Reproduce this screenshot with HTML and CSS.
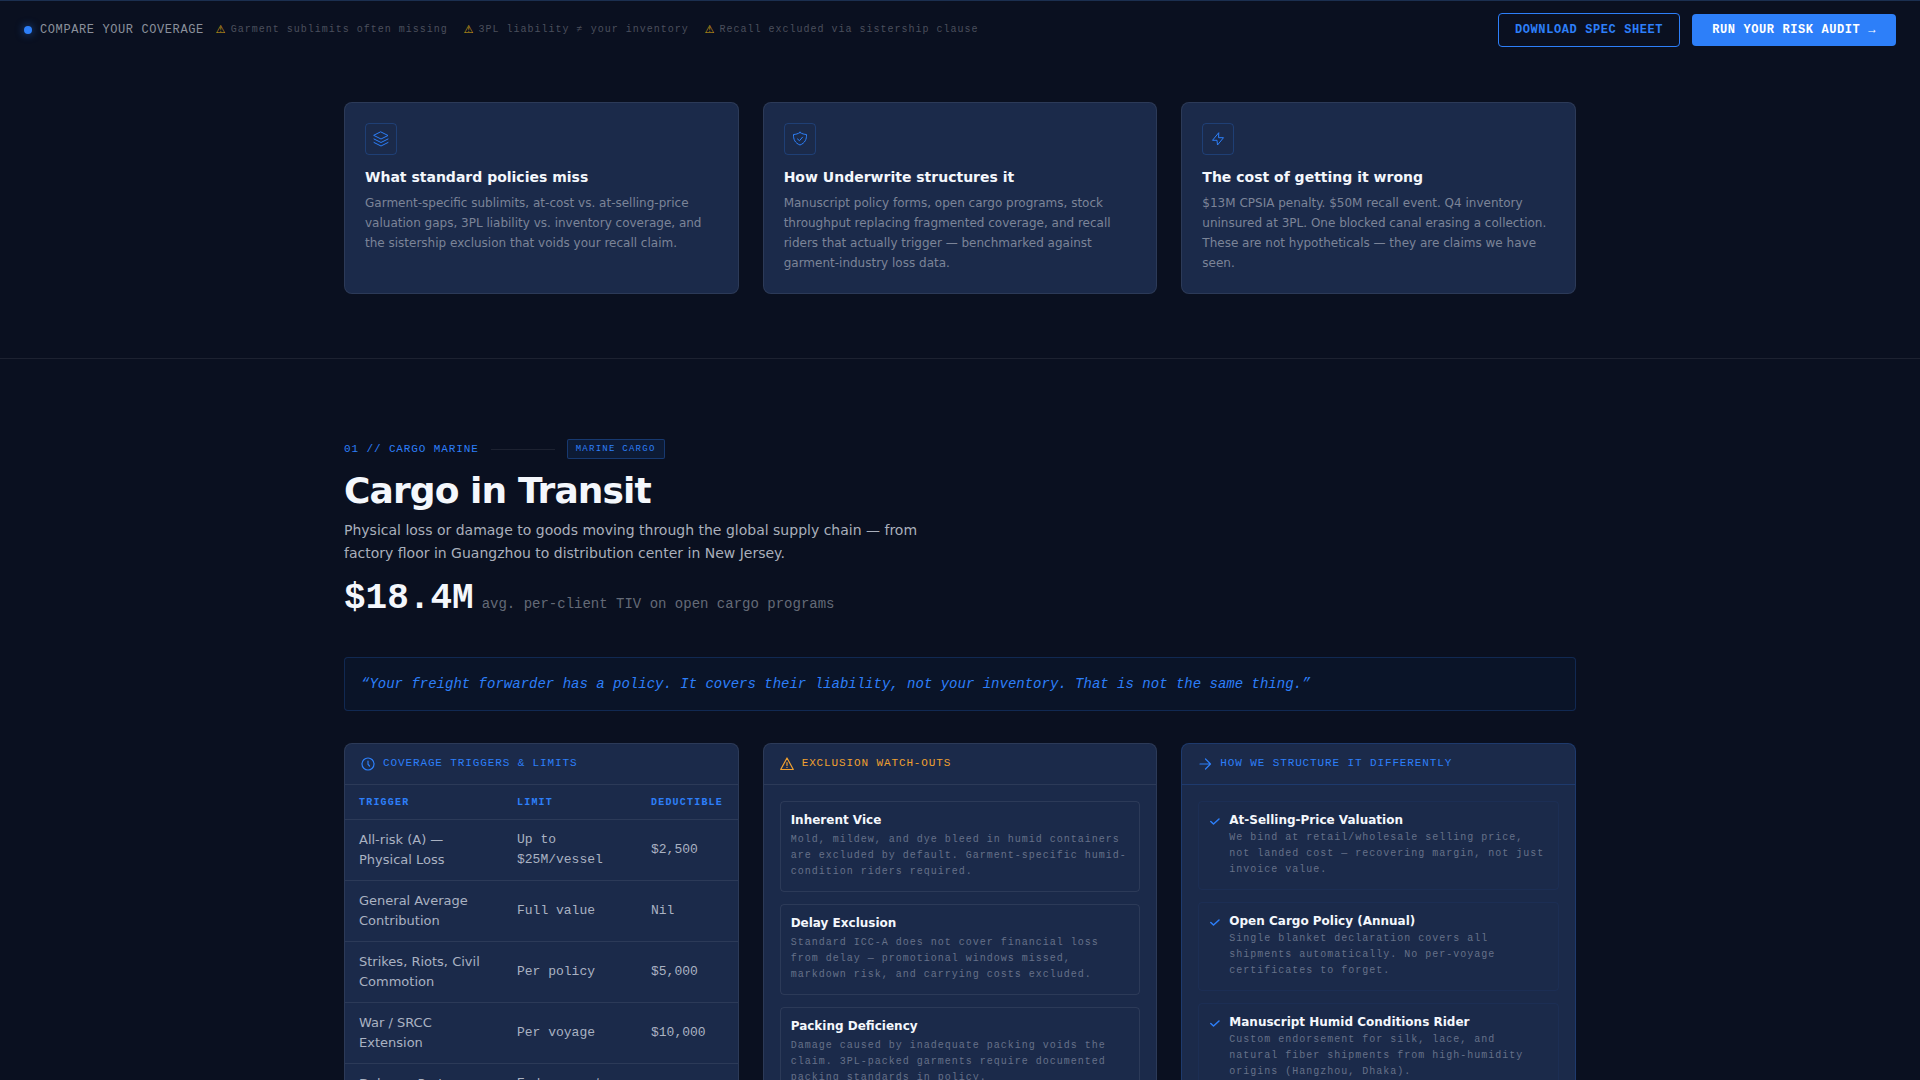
FILE: index.html
```html
<!DOCTYPE html>
<html lang="en">

<head>
    <meta charset="UTF-8" />
    <meta name="viewport" content="width=device-width, initial-scale=1.0" />
    <title>Underwrite | Cargo in Transit</title>
    <link rel="stylesheet" href="styles.css">
</head>

<body>
    <header class="compare-bar">
        <div class="compare-left">
            <span class="dot"></span>
            <span class="compare-label">COMPARE YOUR COVERAGE</span>
            <ul class="warnings">
                <li><span class="warn-sign">⚠</span>Garment sublimits often missing</li>
                <li><span class="warn-sign">⚠</span>3PL liability ≠ your inventory</li>
                <li><span class="warn-sign">⚠</span>Recall excluded via sistership clause</li>
            </ul>
        </div>
        <div class="compare-actions">
            <button type="button" class="btn btn-outline">DOWNLOAD SPEC SHEET</button>
            <button type="button" class="btn btn-solid">RUN YOUR RISK AUDIT →</button>
        </div>
    </header>

    <main>
        <section class="intro">
            <div class="container grid">
                <article class="card">
                    <div class="card-icon">
                        <svg width="16" height="16" viewBox="0 0 16 16" fill="none" stroke="currentColor" stroke-linecap="round" stroke-linejoin="round">
                            <path d="M8 1 15 4.500 8 8 1 4.500z" />
                            <path d="M1 8l7 3.500L15 8" />
                            <path d="M1 11.500l7 3.500 7-3.500" />
                        </svg>
                    </div>
                    <h3>What standard policies miss</h3>
                    <p>Garment-specific sublimits, at-cost vs. at-selling-price valuation gaps, 3PL liability vs. inventory coverage, and the sistership exclusion that voids your recall claim.</p>
                </article>
                <article class="card">
                    <div class="card-icon">
                        <svg width="16" height="16" viewBox="0 0 16 16" fill="none" stroke="currentColor" stroke-linecap="round" stroke-linejoin="round">
                            <path d="M8 1.500c2 1.300 4.200 1.900 6.500 2 .2 4.800-1.500 8.600-6.500 10.500C3 12.100 1.300 8.300 1.500 3.500 3.800 3.400 6 2.800 8 1.500z" />
                            <path d="M5.500 8l2 1.700 3-3.500" />
                        </svg>
                    </div>
                    <h3>How Underwrite structures it</h3>
                    <p>Manuscript policy forms, open cargo programs, stock throughput replacing fragmented coverage, and recall riders that actually trigger — benchmarked against garment-industry loss data.</p>
                </article>
                <article class="card">
                    <div class="card-icon">
                        <svg width="16" height="16" viewBox="0 0 16 16" fill="none" stroke="currentColor" stroke-linecap="round" stroke-linejoin="round">
                            <path d="M8.500 2 2.500 9.300H7L7.500 14l6-7.300H9z" />
                        </svg>
                    </div>
                    <h3>The cost of getting it wrong</h3>
                    <p>$13M CPSIA penalty. $50M recall event. Q4 inventory uninsured at 3PL. One blocked canal erasing a collection. These are not hypotheticals — they are claims we have seen.</p>
                </article>
            </div>
        </section>

        <section class="coverage">
            <div class="container">
                <div class="eyebrow">
                    <span>01 // CARGO MARINE</span>
                    <span class="rule"></span>
                    <span class="tag">MARINE CARGO</span>
                </div>
                <h2>Cargo in Transit</h2>
                <p class="lead">Physical loss or damage to goods moving through the global supply chain — from factory floor in Guangzhou to distribution center in New Jersey.</p>
                <div class="stat">
                    <span class="stat-value">$18.4M</span>
                    <span class="stat-label">avg. per-client TIV on open cargo programs</span>
                </div>

                <blockquote>“Your freight forwarder has a policy. It covers their liability, not your inventory. That is not the same thing.”</blockquote>

                <div class="grid">
                    <div class="panel">
                        <div class="panel-head">
                            <svg width="14" height="14" viewBox="0 0 14 14" fill="none" stroke="currentColor" stroke-width="1.200" stroke-linecap="round">
                                <circle cx="7" cy="7" r="6" />
                                <path d="M7 4v3.200l1.500 1.800" />
                            </svg>
                            <h3>COVERAGE TRIGGERS &amp; LIMITS</h3>
                        </div>
                        <table>
                            <thead>
                                <tr>
                                    <th class="col-trigger">TRIGGER</th>
                                    <th class="col-limit">LIMIT</th>
                                    <th>DEDUCTIBLE</th>
                                </tr>
                            </thead>
                            <tbody>
                                <tr>
                                    <td>All-risk (A) — Physical Loss</td>
                                    <td>Up to $25M/vessel</td>
                                    <td>$2,500</td>
                                </tr>
                                <tr>
                                    <td>General Average Contribution</td>
                                    <td>Full value</td>
                                    <td>Nil</td>
                                </tr>
                                <tr>
                                    <td>Strikes, Riots, Civil Commotion</td>
                                    <td>Per policy</td>
                                    <td>$5,000</td>
                                </tr>
                                <tr>
                                    <td>War / SRCC Extension</td>
                                    <td>Per voyage</td>
                                    <td>$10,000</td>
                                </tr>
                                <tr>
                                    <td>Delay — Port Congestion</td>
                                    <td>Endorsement required</td>
                                    <td>Varies</td>
                                </tr>
                            </tbody>
                        </table>
                    </div>

                    <div class="panel">
                        <div class="panel-head panel-head-warn">
                            <svg width="14" height="14" viewBox="0 0 14 14" fill="none" stroke="currentColor" stroke-width="1.200" stroke-linecap="round" stroke-linejoin="round">
                                <path d="M7 1 13.300 12.500H.7z" />
                                <path d="M7 5.500v3M7 10.300v.2" />
                            </svg>
                            <h3>EXCLUSION WATCH-OUTS</h3>
                        </div>
                        <div class="panel-body">
                            <div class="exclusion">
                                <h4>Inherent Vice</h4>
                                <p>Mold, mildew, and dye bleed in humid containers are excluded by default. Garment-specific humid-condition riders required.</p>
                            </div>
                            <div class="exclusion">
                                <h4>Delay Exclusion</h4>
                                <p>Standard ICC-A does not cover financial loss from delay — promotional windows missed, markdown risk, and carrying costs excluded.</p>
                            </div>
                            <div class="exclusion">
                                <h4>Packing Deficiency</h4>
                                <p>Damage caused by inadequate packing voids the claim. 3PL-packed garments require documented packing standards in policy.</p>
                            </div>
                        </div>
                    </div>

                    <div class="panel panel-blue">
                        <div class="panel-head">
                            <svg width="14" height="14" viewBox="0 0 14 14" fill="none" stroke="currentColor" stroke-width="1.200" stroke-linecap="round" stroke-linejoin="round">
                                <path d="M2 7h10M7.500 2 12.500 7l-5 5" />
                            </svg>
                            <h3>HOW WE STRUCTURE IT DIFFERENTLY</h3>
                        </div>
                        <div class="panel-body">
                            <div class="solution">
                                <svg class="check" width="12" height="14" viewBox="0 0 12 14" fill="none" stroke="currentColor" stroke-width="1.500" stroke-linecap="round" stroke-linejoin="round">
                                    <path d="M1.800 7.500l2.700 2.500 5.500-5" />
                                </svg>
                                <div>
                                    <h4>At-Selling-Price Valuation</h4>
                                    <p>We bind at retail/wholesale selling price, not landed cost — recovering margin, not just invoice value.</p>
                                </div>
                            </div>
                            <div class="solution">
                                <svg class="check" width="12" height="14" viewBox="0 0 12 14" fill="none" stroke="currentColor" stroke-width="1.500" stroke-linecap="round" stroke-linejoin="round">
                                    <path d="M1.800 7.500l2.700 2.500 5.500-5" />
                                </svg>
                                <div>
                                    <h4>Open Cargo Policy (Annual)</h4>
                                    <p>Single blanket declaration covers all shipments automatically. No per-voyage certificates to forget.</p>
                                </div>
                            </div>
                            <div class="solution">
                                <svg class="check" width="12" height="14" viewBox="0 0 12 14" fill="none" stroke="currentColor" stroke-width="1.500" stroke-linecap="round" stroke-linejoin="round">
                                    <path d="M1.800 7.500l2.700 2.500 5.500-5" />
                                </svg>
                                <div>
                                    <h4>Manuscript Humid Conditions Rider</h4>
                                    <p>Custom endorsement for silk, lace, and natural fiber shipments from high-humidity origins (Hangzhou, Dhaka).</p>
                                </div>
                            </div>
                        </div>
                    </div>
                </div>
            </div>
        </section>
    </main>
</body>

</html>
```
FILE: styles.css
```css
:root {
    --bg: #0a1020;
    --card: #1b2a4a;
    --blue: #2d7ff9;
    --line: rgba(255, 255, 255, 0.08);
    --mono: 'Liberation Mono', 'Courier New', monospace;
}

* {
    box-sizing: border-box;
    margin: 0;
    padding: 0;
}

body {
    background-color: var(--bg);
    color: #f4f7fc;
    font-family: 'DejaVu Sans', sans-serif;
    height: 100vh;
    overflow: hidden;
}

/* top bar */
.compare-bar {
    display: flex;
    justify-content: space-between;
    align-items: center;
    padding: 12px 24px;
    border-top: 1px solid #1b2f50;
    font-family: var(--mono);
}

.compare-left {
    display: flex;
    align-items: center;
}

.dot {
    width: 8px;
    height: 8px;
    margin-right: 8px;
    border-radius: 50%;
    background: var(--blue);
    box-shadow: 0 0 8px rgba(45, 127, 249, 0.6);
}

.compare-label {
    margin-right: 12px;
    color: #8b909c;
    font-size: 12px;
    line-height: 18px;
    letter-spacing: 0.05em;
}

.warnings {
    display: flex;
    gap: 16px;
    list-style: none;
    color: #4a4f5c;
    font-size: 10px;
    line-height: 16px;
    letter-spacing: 0.1em;
}

.warnings li {
    display: flex;
    gap: 4px;
}

.warn-sign {
    color: #d9a514;
    font-family: 'DejaVu Sans', sans-serif;
    font-size: 11px;
}

.compare-actions {
    display: flex;
    align-items: center;
    gap: 12px;
}

.btn {
    border: none;
    border-radius: 4px;
    font-family: var(--mono);
    font-size: 12px;
    font-weight: bold;
    line-height: 16px;
    letter-spacing: 0.05em;
    cursor: pointer;
}

.btn-outline {
    padding: 8px 16px;
    border: 1px solid var(--blue);
    background: none;
    color: var(--blue);
}

.btn-solid {
    padding: 8px 20px;
    background: var(--blue);
    color: white;
}

.container {
    max-width: 1280px;
    margin: 0 auto;
    padding: 0 24px;
}

.grid {
    display: grid;
    grid-template-columns: repeat(3, 1fr);
    gap: 24px;
}

/* intro cards */
.intro {
    padding: 43px 0 64px;
    border-bottom: 1px solid var(--line);
}

.card {
    padding: 20px;
    background: var(--card);
    border: 1px solid var(--line);
    border-radius: 8px;
}

.card-icon {
    display: flex;
    align-items: center;
    justify-content: center;
    width: 32px;
    height: 32px;
    margin-bottom: 12px;
    border: 1px solid rgba(45, 127, 249, 0.25);
    border-radius: 4px;
    color: var(--blue);
}

.card h3 {
    margin-bottom: 6px;
    font-size: 14px;
    line-height: 20px;
}

.card p {
    color: #7b8498;
    font-size: 12px;
    line-height: 20px;
}

/* coverage section */
.coverage {
    padding: 80px 0;
}

.eyebrow {
    display: flex;
    align-items: center;
    gap: 12px;
    margin-bottom: 12px;
    color: var(--blue);
    font-family: var(--mono);
    font-size: 11px;
    line-height: 16px;
    letter-spacing: 0.08em;
}

.rule {
    width: 64px;
    height: 1px;
    background: var(--line);
}

.tag {
    padding: 2px 8px;
    border: 1px solid rgba(45, 127, 249, 0.3);
    border-radius: 2px;
    background: rgba(45, 127, 249, 0.1);
    font-size: 9px;
    line-height: 14px;
    letter-spacing: 0.14em;
}

h2 {
    margin-bottom: 8px;
    font-size: 36px;
    line-height: 40px;
    letter-spacing: -0.025em;
}

.lead {
    max-width: 576px;
    margin-bottom: 16px;
    color: #a9afbb;
    font-size: 14px;
    line-height: 23px;
}

.stat {
    display: flex;
    align-items: baseline;
    gap: 8px;
    margin-bottom: 40px;
    font-family: var(--mono);
}

.stat-value {
    font-size: 36px;
    font-weight: bold;
    line-height: 36px;
}

.stat-label {
    color: #646a77;
    font-size: 14px;
    line-height: 20px;
}

blockquote {
    margin-bottom: 32px;
    padding: 16px;
    border: 1px solid rgba(45, 127, 249, 0.2);
    border-radius: 4px;
    background: #0a1428;
    color: var(--blue);
    font-family: var(--mono);
    font-size: 14px;
    font-style: italic;
    line-height: 20px;
}

/* panels */
.panel {
    overflow: hidden;
    background: var(--card);
    border: 1px solid var(--line);
    border-radius: 8px;
}

.panel-head {
    display: flex;
    align-items: center;
    gap: 8px;
    padding: 12px 16px;
    border-bottom: 1px solid var(--line);
    color: var(--blue);
}

.panel-head-warn {
    color: #f0a030;
}

.panel-blue,
.panel-blue .panel-head {
    border-color: rgba(45, 127, 249, 0.2);
}

.panel-head h3 {
    margin-bottom: 2px;
    font-family: var(--mono);
    font-size: 11px;
    font-weight: normal;
    line-height: 14px;
    letter-spacing: 0.08em;
}

table {
    width: 100%;
    border-collapse: collapse;
}

th,
td {
    padding: 10px 14px;
    border-bottom: 1px solid var(--line);
    text-align: left;
}

th {
    padding: 11px 14px 9px;
    color: var(--blue);
    font-family: var(--mono);
    font-size: 10px;
    line-height: 14px;
    letter-spacing: 0.12em;
}

.col-trigger {
    width: 158px;
}

.col-limit {
    width: 134px;
}

td {
    color: #aab2c2;
    font-family: var(--mono);
    font-size: 13px;
    line-height: 20px;
}

td:first-child {
    font-family: 'DejaVu Sans', sans-serif;
}

.panel-body {
    display: flex;
    flex-direction: column;
    gap: 12px;
    padding: 16px;
}

.exclusion,
.solution {
    padding: 12px 10px 11px;
    border: 1px solid var(--line);
    border-radius: 4px;
}

.solution {
    display: flex;
    align-items: flex-start;
    gap: 8px;
    border-color: rgba(45, 127, 249, 0.06);
}

.check {
    flex-shrink: 0;
    color: var(--blue);
}

.panel-body h4 {
    font-size: 12px;
    line-height: 12px;
}

.panel-body p {
    color: #667189;
    font-family: var(--mono);
    font-size: 10px;
    line-height: 16px;
    letter-spacing: 0.1em;
}

.exclusion h4 {
    margin-bottom: 6px;
}

.solution h4 {
    margin-bottom: 4px;
}
```
